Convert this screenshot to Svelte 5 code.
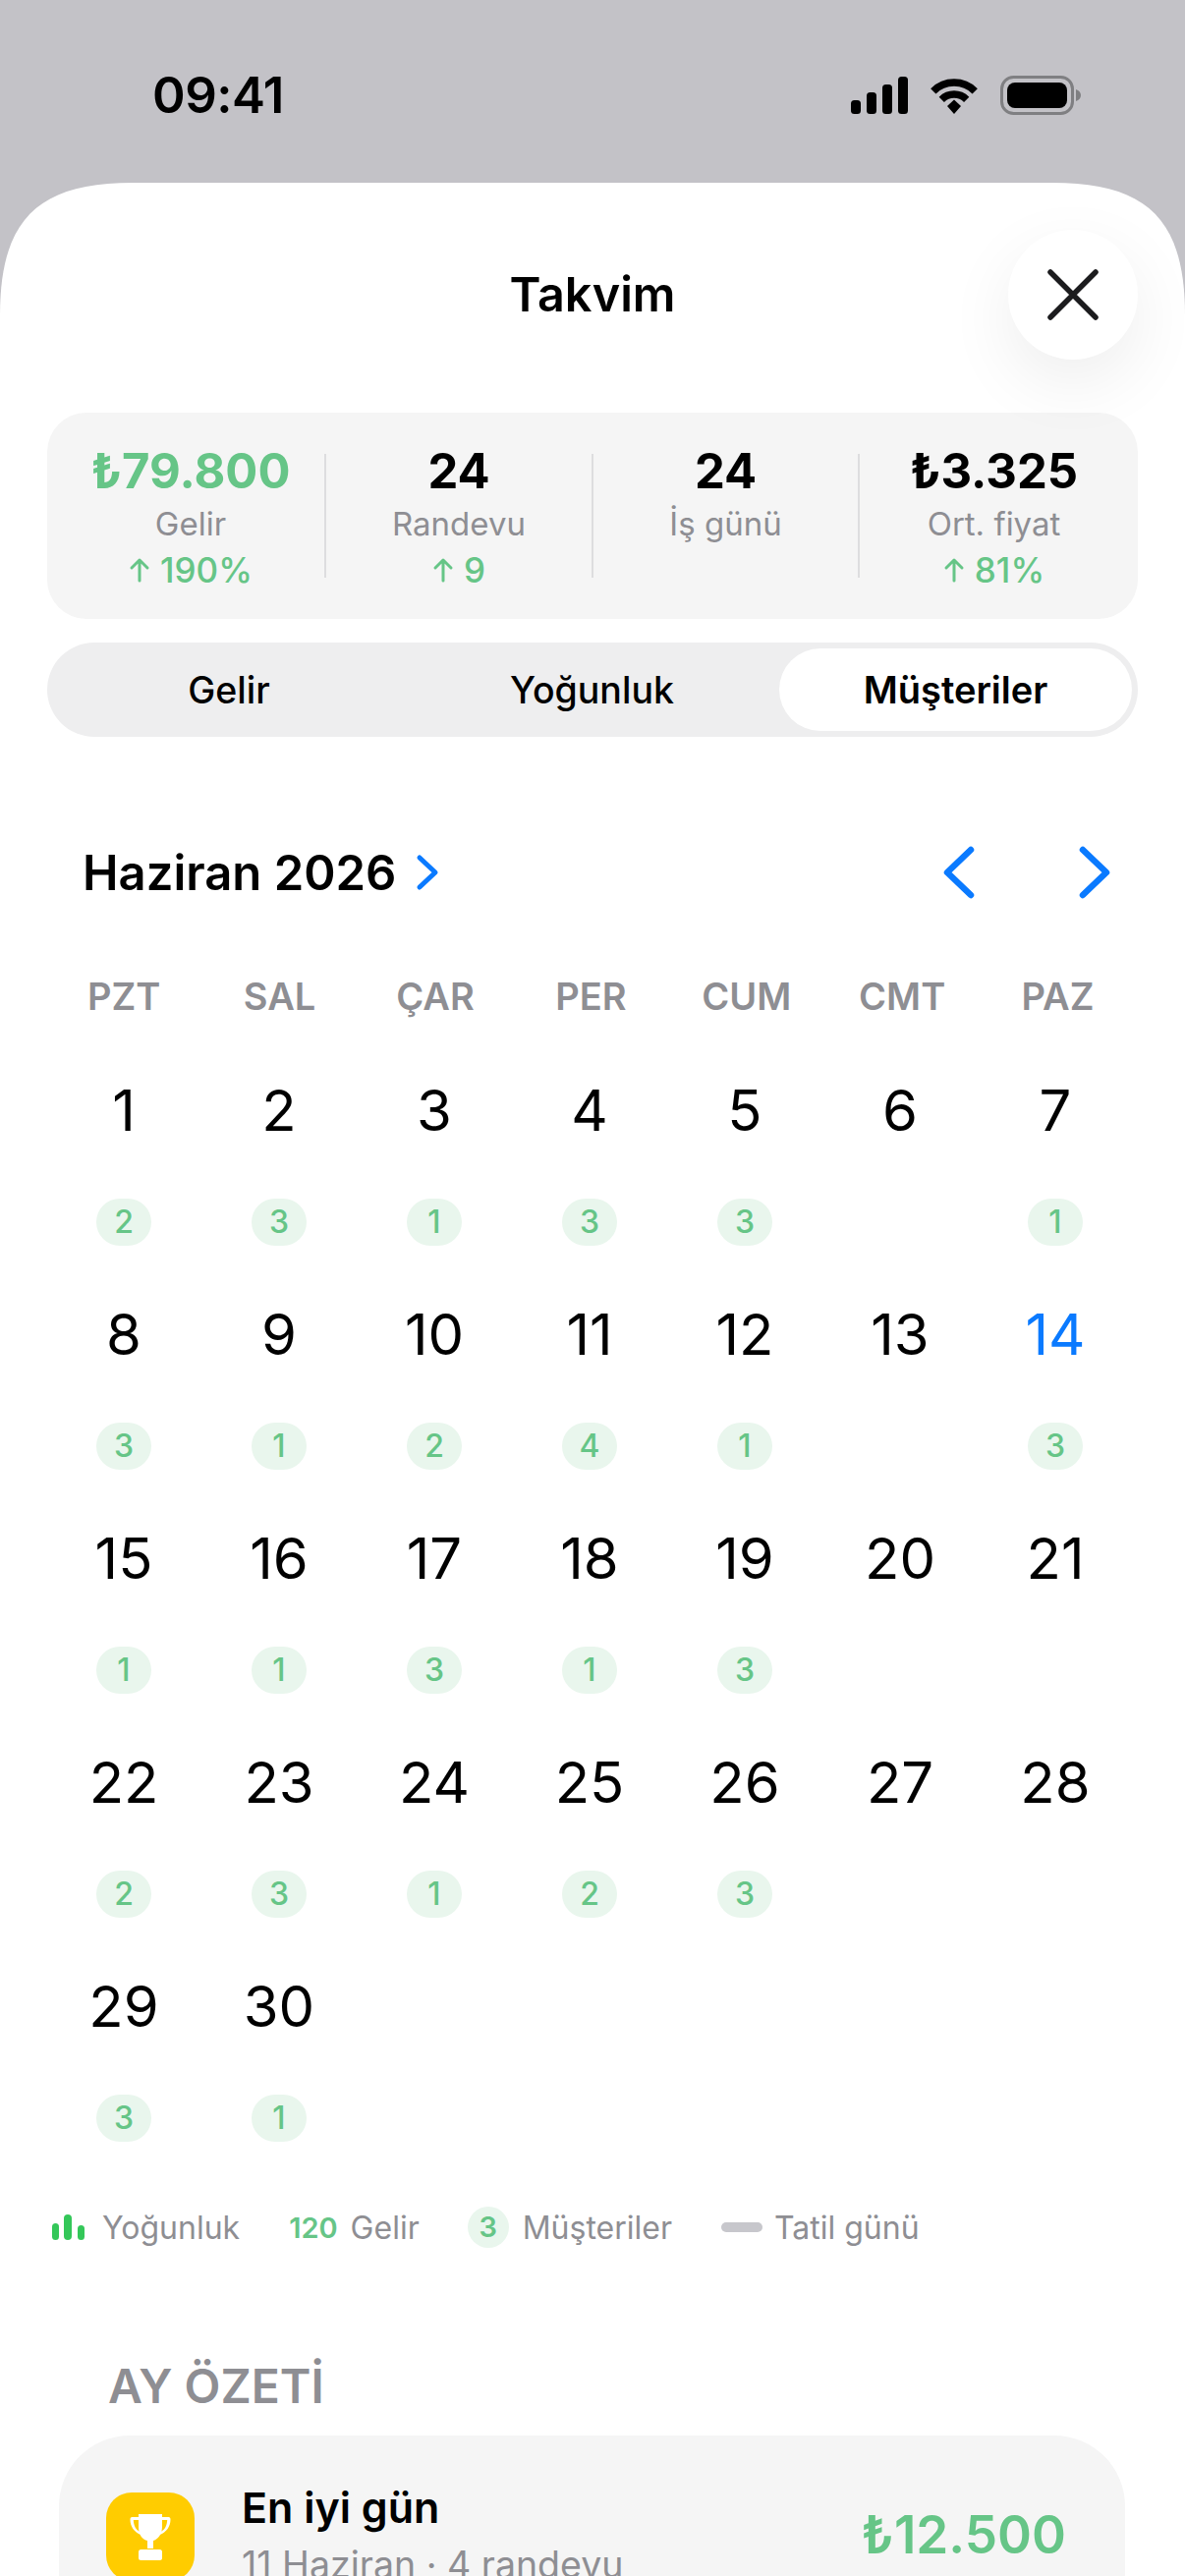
<script>
  const stats = [
    { value: '₺79.800', label: 'Gelir', delta: '190%', green: true },
    { value: '24', label: 'Randevu', delta: '9' },
    { value: '24', label: 'İş günü' },
    { value: '₺3.325', label: 'Ort. fiyat', delta: '81%' },
  ]
  const weekdays = ['PZT', 'SAL', 'ÇAR', 'PER', 'CUM', 'CMT', 'PAZ']
  // customers per day, 0 means no badge
  const counts = [2, 3, 1, 3, 3, 0, 1, 3, 1, 2, 4, 1, 0, 3, 1, 1, 3, 1, 3, 0, 0, 2, 3, 1, 2, 3, 0, 0, 3, 1]
  const today = 14
</script>

<div class="screen">
  <div class="status">
    <span class="time">09:41</span>
    <div class="status-icons">
      <svg class="signal" width="58" height="38" viewBox="0 0 58 38" fill="#000">
        <rect x="0" y="24" width="10" height="14" rx="3.5" />
        <rect x="16" y="16" width="10" height="22" rx="3.5" />
        <rect x="32" y="8" width="10" height="30" rx="3.5" />
        <rect x="48" y="0" width="10" height="38" rx="3.5" />
      </svg>
      <svg class="wifi" width="50" height="38" viewBox="0 0 50 38" fill="none" stroke="#000" stroke-width="7.5">
        <path d="M3.8 14.8a30 30 0 0 1 42.4 0" />
        <path d="M12.3 23.3a18 18 0 0 1 25.4 0" />
        <path d="M18 30l7-6.5 7 6.500-7 8z" fill="#000" stroke="none" />
      </svg>
      <svg class="battery" width="82" height="40" viewBox="0 0 82 40">
        <rect x="1.5" y="1.5" width="72" height="37" rx="12" fill="none" stroke="#7f7f82" stroke-width="3" />
        <rect x="7" y="7" width="61" height="26" rx="8" fill="#000" />
        <path d="M77 14c3 1 5 3 5 6s-2 5-5 6z" fill="#7f7f82" />
      </svg>
    </div>
  </div>

  <div class="sheet">
    <header class="sheet-head">
      <h1>Takvim</h1>
      <button class="close" aria-label="Kapat">
        <svg width="52" height="52" viewBox="0 0 52 52" fill="none" stroke="#1c1c1e" stroke-width="5.5" stroke-linecap="round">
          <path d="M3 3l46 46M49 3L3 49" />
        </svg>
      </button>
    </header>

    <section class="stats">
      {#each stats as s}
        <div class="stat">
          <div class="stat-value" class:green={s.green}>{s.value}</div>
          <div class="stat-label">{s.label}</div>
          {#if s.delta}
            <div class="stat-delta">
              <svg width="22" height="26" viewBox="0 0 22 26" fill="none" stroke="#66c587" stroke-width="3" stroke-linecap="round" stroke-linejoin="round">
                <path d="M11 24V3M3 11l8-8 8 8" />
              </svg>
              {s.delta}
            </div>
          {/if}
        </div>
      {/each}
    </section>

    <div class="segments">
      <div class="seg">Gelir</div>
      <div class="seg">Yoğunluk</div>
      <div class="seg active">Müşteriler</div>
    </div>

    <div class="month-row">
      <div class="month">
        <span>Haziran 2026</span>
        <svg width="24" height="38" viewBox="0 0 24 38" fill="none" stroke="#0a7aff" stroke-width="5" stroke-linecap="round" stroke-linejoin="round">
          <path d="M4 4l16 15L4 34" />
        </svg>
      </div>
      <div class="month-nav">
        <svg width="36" height="56" viewBox="0 0 36 56" fill="none" stroke="#0a7aff" stroke-width="6.5" stroke-linecap="round" stroke-linejoin="round">
          <path d="M30 5L6 28l24 23" />
        </svg>
        <svg width="36" height="56" viewBox="0 0 36 56" fill="none" stroke="#0a7aff" stroke-width="6.5" stroke-linecap="round" stroke-linejoin="round">
          <path d="M6 5l24 23L6 51" />
        </svg>
      </div>
    </div>

    <div class="weekdays">
      {#each weekdays as d}
        <div>{d}</div>
      {/each}
    </div>

    <div class="days">
      {#each counts as c, i}
        <div class="day">
          <div class="num" class:today={i + 1 === today}>{i + 1}</div>
          {#if c}
            <div class="pill">{c}</div>
          {/if}
        </div>
      {/each}
    </div>

    <div class="legend">
      <div class="leg leg-1">
        <svg width="33" height="26" viewBox="0 0 33 26" fill="#34c759">
          <rect x="0" y="9" width="7" height="17" rx="3.5" />
          <rect x="12" y="0" width="8" height="26" rx="4" />
          <rect x="26" y="11" width="7" height="15" rx="3.5" />
        </svg>
        <span>Yoğunluk</span>
      </div>
      <div class="leg leg-2"><b>120</b><span>Gelir</span></div>
      <div class="leg leg-3"><b class="pill small">3</b><span>Müşteriler</span></div>
      <div class="leg leg-4"><i class="dash"></i><span>Tatil günü</span></div>
    </div>

    <h2 class="section-title">AY ÖZETİ</h2>

    <div class="summary">
      <div class="trophy">
        <svg width="42" height="48" viewBox="0 0 42 48" fill="#fff">
          <path d="M9 1h24v13c0 8-5 13-9 14v8h-6v-8C13 27 9 22 9 14z" />
          <path d="M9 4H2.500C1 4 .5 5 .5 6.500c0 7 4 13 11 15.500l-1-3C6 17 4 12 3.800 7H9zM33 4h6.500C41 4 41.500 5 41.500 6.500c0 7-4 13-11 15.500l1-3C36 17 38 12 38.200 7H33z" />
          <rect x="9" y="37" width="24" height="11" rx="2.500" />
        </svg>
      </div>
      <div class="summary-text">
        <div class="summary-title">En iyi gün</div>
        <div class="summary-sub">11 Haziran · 4 randevu</div>
      </div>
      <div class="summary-value">₺12.500</div>
    </div>
  </div>
</div>

<style>
  :global(body) {
    margin: 0;
    background: #fff;
  }

  .screen {
    width: 1206px;
    height: 2622px;
    overflow: hidden;
    background: #c3c2c7;
    font-family: Inter, 'Liberation Sans', sans-serif;
    color: #000;
    display: flex;
    flex-direction: column;
  }

  /* status bar */
  .status {
    height: 186px;
    flex: none;
    display: flex;
    justify-content: space-between;
    align-items: flex-start;
    padding: 67px 106px 0 155px;
    box-sizing: border-box;
  }

  .time {
    font-size: 51px;
    font-weight: 600;
    line-height: 60px;
    letter-spacing: -0.5px;
  }

  .status-icons {
    display: flex;
    align-items: center;
    gap: 22px;
    margin-top: 10px;
  }

  /* sheet, the continuous corners don't come from border-radius */
  .sheet {
    flex: 1;
    background: #fff;
    clip-path: path('M0 135C0 38 38 0 135 0H1071C1168 0 1206 38 1206 135V2436H0Z');
    padding: 0 48px;
    min-height: 0;
  }

  .sheet-head {
    position: relative;
    height: 234px;
    display: flex;
    justify-content: center;
    align-items: flex-start;
  }

  h1 {
    margin: 86px 0 0;
    font-size: 48.5px;
    line-height: 56px;
    font-weight: 600;
  }

  .close {
    position: absolute;
    right: 0;
    top: 48px;
    width: 132px;
    height: 132px;
    border: 0;
    border-radius: 50%;
    background: #fff;
    box-shadow: 0 24px 70px rgba(0, 0, 0, 0.07);
    display: flex;
    align-items: center;
    justify-content: center;
    padding: 0;
  }

  /* stats card */
  .stats {
    height: 210px;
    background: #f5f5f5;
    border-radius: 40px;
    display: grid;
    grid-template-columns: 274px 272px 271px 1fr;
    padding: 42px 10px 0;
    box-sizing: border-box;
    text-align: center;
  }

  .stat {
    height: 126px;
    border-right: 2px solid #dddddf;
    box-sizing: border-box;
  }

  .stat:last-child {
    border-right: 0;
  }

  .stat-value {
    font-size: 49px;
    line-height: 40px;
    font-weight: 700;
    margin-top: -2px;
  }

  .green {
    color: #66c587;
  }

  .stat-label {
    font-size: 33px;
    line-height: 40px;
    color: #8e8e93;
    margin-top: 13px;
  }

  .stat-delta {
    font-size: 35px;
    line-height: 36px;
    font-weight: 500;
    color: #66c587;
    margin-top: 9px;
    display: flex;
    align-items: center;
    justify-content: center;
    gap: 10px;
  }

  /* segmented control */
  .segments {
    margin-top: 24px;
    height: 96px;
    background: #eeeeef;
    border-radius: 48px;
    display: grid;
    grid-template-columns: 358px 381px 1fr;
    padding: 6px;
    box-sizing: border-box;
  }

  .seg {
    font-size: 37.5px;
    font-weight: 500;
    display: flex;
    align-items: center;
    justify-content: center;
  }

  .seg.active {
    background: #fff;
    border-radius: 42px;
    font-size: 38px;
    font-weight: 600;
  }

  /* calendar */
  .month-row {
    margin-top: 104px;
    height: 68px;
    padding: 0 26px 0 36px;
    display: flex;
    justify-content: space-between;
    align-items: center;
  }

  .month {
    display: flex;
    align-items: center;
    gap: 20px;
    font-size: 49px;
    font-weight: 600;
  }

  .month-nav {
    display: flex;
    gap: 102px;
  }

  .weekdays,
  .days {
    display: grid;
    grid-template-columns: repeat(7, 158px);
    margin-left: -1px;
  }

  .weekdays {
    grid-template-columns: repeat(7, 158.4px);
    margin-top: 67px;
    height: 50px;
    font-size: 38px;
    line-height: 50px;
    font-weight: 600;
    color: #8e8e93;
    text-align: center;
  }

  .days {
    margin-top: 56px;
    grid-auto-rows: 228px;
  }

  .day {
    display: flex;
    flex-direction: column;
    align-items: center;
  }

  .num {
    height: 70px;
    font-size: 58px;
    line-height: 70px;
    font-weight: 400;
  }

  .num.today {
    color: #0a7aff;
  }

  .pill {
    margin-top: 55px;
    height: 48px;
    min-width: 56px;
    box-sizing: border-box;
    border-radius: 24px;
    background: #e9f6ed;
    color: #66c587;
    font-size: 32px;
    font-weight: 500;
    line-height: 48px;
    text-align: center;
  }

  /* legend */
  .legend {
    margin-top: 8px;
    margin-left: 5px;
    display: flex;
    align-items: center;
    height: 48px;
    font-size: 32px;
    color: #8e8e93;
  }

  .leg {
    display: flex;
    align-items: center;
  }

  .leg span {
    margin-left: 18px;
  }

  .leg b {
    font-weight: 600;
    color: #66c587;
    font-size: 29px;
  }

  .leg-1 {
    margin-right: 50px;
  }

  .leg-2 span {
    margin-left: 13px;
  }

  .leg-2 {
    margin-right: 49px;
  }

  .leg-3 {
    margin-right: 50px;
  }

  .leg-3 span {
    margin-left: 14px;
  }

  .leg-4 span {
    margin-left: 12px;
  }

  .pill.small {
    margin: 0;
    min-width: 42px;
    height: 42px;
    line-height: 42px;
    border-radius: 21px;
  }

  .dash {
    display: block;
    flex: none;
    width: 42px;
    height: 10px;
    border-radius: 5px;
    background: #c7c7cc;
  }

  .section-title {
    margin: 110px 0 0 62px;
    font-size: 48px;
    line-height: 56px;
    font-weight: 600;
    color: #8e8e93;
  }

  /* month summary */
  .summary {
    margin: 22px 13px 0 12px;
    height: 220px;
    background: #f5f5f5;
    border-radius: 72px;
    display: flex;
    align-items: flex-start;
    padding: 58px 60px 0 48px;
    box-sizing: border-box;
  }

  .trophy {
    width: 90px;
    height: 90px;
    flex: none;
    border-radius: 26px;
    background: #ffcc00;
    display: flex;
    align-items: center;
    justify-content: center;
  }

  .summary-text {
    margin-left: 48px;
    flex: 1;
    margin-top: -13px;
  }

  .summary-title {
    font-size: 43px;
    line-height: 56px;
    font-weight: 600;
  }

  .summary-sub {
    font-size: 37.5px;
    line-height: 44px;
    color: #8e8e93;
    margin-top: 9px;
  }

  .summary-value {
    font-size: 53px;
    line-height: 60px;
    font-weight: 600;
    color: #66c587;
    margin-top: 13px;
  }
</style>
